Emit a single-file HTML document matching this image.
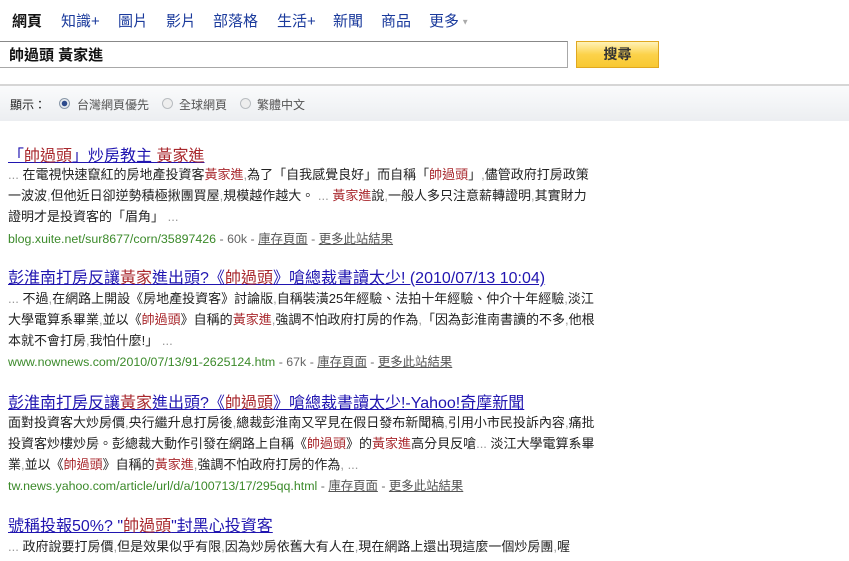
<!DOCTYPE html>
<html><head><meta charset="utf-8"><style>
*{margin:0;padding:0;box-sizing:border-box}
body{width:849px;height:561px;overflow:hidden;background:#fff;font-family:"Liberation Sans","Noto Sans CJK TC",sans-serif;position:relative;color:#222}
.a{position:absolute;white-space:nowrap}
.nav{top:10px;font-size:15px;color:#1a3a9c}
.t{font-size:16px;color:#2015b0;text-decoration:underline;line-height:18px}
.s{font-size:13px;color:#222;line-height:16px;letter-spacing:0}
.r{color:#a8272c}
.g{color:#999}
.u{font-size:12.4px;color:#3b8a2a;line-height:15px}
.u .k{color:#666}
.u .c{color:#555;text-decoration:underline}
</style></head><body>
<div class="a nav" style="left:12px;color:#111;font-weight:bold">網頁</div>
<div class="a nav" style="left:61px">知識+</div>
<div class="a nav" style="left:118px">圖片</div>
<div class="a nav" style="left:166px">影片</div>
<div class="a nav" style="left:213px">部落格</div>
<div class="a nav" style="left:277px">生活+</div>
<div class="a nav" style="left:333px">新聞</div>
<div class="a nav" style="left:381px">商品</div>
<div class="a nav" style="left:429px">更多<span style="font-size:8px;color:#aaa;vertical-align:middle"> ▼</span></div>
<div class="a" style="left:-2px;top:41px;width:570px;height:27px;border:1px solid #a8a8a8;border-top-color:#888"></div>
<div class="a" style="left:9px;top:44px;font-size:15px;font-weight:bold;color:#111">帥過頭 黃家進</div>
<div class="a" style="left:576px;top:41px;width:83px;height:27px;border:1px solid #e0a820;background:linear-gradient(#fff2b8,#fcd24a 50%,#f8c832);text-align:center;font-size:14px;font-weight:bold;color:#333;line-height:25px">搜尋</div>
<div class="a" style="left:0;top:84px;width:849px;height:37px;border-top:2px solid #d6d6d6;background:linear-gradient(#fafbfc,#eceef1)"></div>
<div class="a" style="left:10px;top:96px;font-size:12px;color:#222">顯示：</div>
<div class="a" style="left:59px;top:98px;width:11px;height:11px;border-radius:50%;border:1px solid #8a98a8;background:radial-gradient(circle,#2c4a8c 0,#2c4a8c 2.5px,#e8ecf0 3px)"></div>
<div class="a" style="left:77px;top:96px;font-size:12px;color:#555">台灣網頁優先</div>
<div class="a" style="left:162px;top:98px;width:11px;height:11px;border-radius:50%;border:1px solid #b8bcc0;background:#eee"></div>
<div class="a" style="left:179px;top:96px;font-size:12px;color:#555">全球網頁</div>
<div class="a" style="left:240px;top:98px;width:11px;height:11px;border-radius:50%;border:1px solid #b8bcc0;background:#eee"></div>
<div class="a" style="left:257px;top:96px;font-size:12px;color:#555">繁體中文</div>

<div class="a t" style="left:8px;top:148px">「<span class="r">帥過頭</span>」炒房教主 <span class="r">黃家進</span></div>
<div class="a s" style="left:8px;top:167px"><span class="g">...</span> 在電視快速竄紅的房地產投資客<span class="r">黃家進</span><span class="g">,</span>為了「自我感覺良好」而自稱「<span class="r">帥過頭</span>」<span class="g">,</span>儘管政府打房政策</div>
<div class="a s" style="left:8px;top:188px">一波波<span class="g">,</span>但他近日卻逆勢積極揪團買屋<span class="g">,</span>規模越作越大。 <span class="g">...</span> <span class="r">黃家進</span>說<span class="g">,</span>一般人多只注意薪轉證明<span class="g">,</span>其實財力</div>
<div class="a s" style="left:8px;top:209px">證明才是投資客的「眉角」 <span class="g">...</span></div>
<div class="a u" style="left:8px;top:232px">blog.xuite.net/sur8677/corn/35897426 <span class="k">- 60k -</span> <span class="c">庫存頁面</span> <span class="k">-</span> <span class="c">更多此站結果</span></div>

<div class="a t" style="left:8px;top:270px">彭淮南打房反讓<span class="r">黃家</span>進出頭?《<span class="r">帥過頭</span>》嗆總裁書讀太少! (2010/07/13 10:04)</div>
<div class="a s" style="left:8px;top:291px"><span class="g">...</span> 不過<span class="g">,</span>在網路上開設《房地產投資客》討論版<span class="g">,</span>自稱裝潢25年經驗、法拍十年經驗、仲介十年經驗<span class="g">,</span>淡江</div>
<div class="a s" style="left:8px;top:312px">大學電算系畢業<span class="g">,</span>並以《<span class="r">帥過頭</span>》自稱的<span class="r">黃家進</span><span class="g">,</span>強調不怕政府打房的作為<span class="g">,</span>「因為彭淮南書讀的不多<span class="g">,</span>他根</div>
<div class="a s" style="left:8px;top:333px">本就不會打房<span class="g">,</span>我怕什麼!」 <span class="g">...</span></div>
<div class="a u" style="left:8px;top:355px">www.nownews.com/2010/07/13/91-2625124.htm <span class="k">- 67k -</span> <span class="c">庫存頁面</span> <span class="k">-</span> <span class="c">更多此站結果</span></div>

<div class="a t" style="left:8px;top:395px">彭淮南打房反讓<span class="r">黃家</span>進出頭?《<span class="r">帥過頭</span>》嗆總裁書讀太少!-Yahoo!奇摩新聞</div>
<div class="a s" style="left:8px;top:415px">面對投資客大炒房價<span class="g">,</span>央行繼升息打房後<span class="g">,</span>總裁彭淮南又罕見在假日發布新聞稿<span class="g">,</span>引用小市民投訴內容<span class="g">,</span>痛批</div>
<div class="a s" style="left:8px;top:436px">投資客炒樓炒房。彭總裁大動作引發在網路上自稱《<span class="r">帥過頭</span>》的<span class="r">黃家進</span>高分貝反嗆<span class="g">...</span> 淡江大學電算系畢</div>
<div class="a s" style="left:8px;top:457px">業<span class="g">,</span>並以《<span class="r">帥過頭</span>》自稱的<span class="r">黃家進</span><span class="g">,</span>強調不怕政府打房的作為<span class="g">, ...</span></div>
<div class="a u" style="left:8px;top:479px">tw.news.yahoo.com/article/url/d/a/100713/17/295qq.html <span class="k">-</span> <span class="c">庫存頁面</span> <span class="k">-</span> <span class="c">更多此站結果</span></div>

<div class="a t" style="left:8px;top:518px">號稱投報50%? "<span class="r">帥過頭</span>"封黑心投資客</div>
<div class="a s" style="left:8px;top:539px"><span class="g">...</span> 政府說要打房價<span class="g">,</span>但是效果似乎有限<span class="g">,</span>因為炒房依舊大有人在<span class="g">,</span>現在網路上還出現這麼一個炒房團<span class="g">,</span>喔</div>
</body></html>
